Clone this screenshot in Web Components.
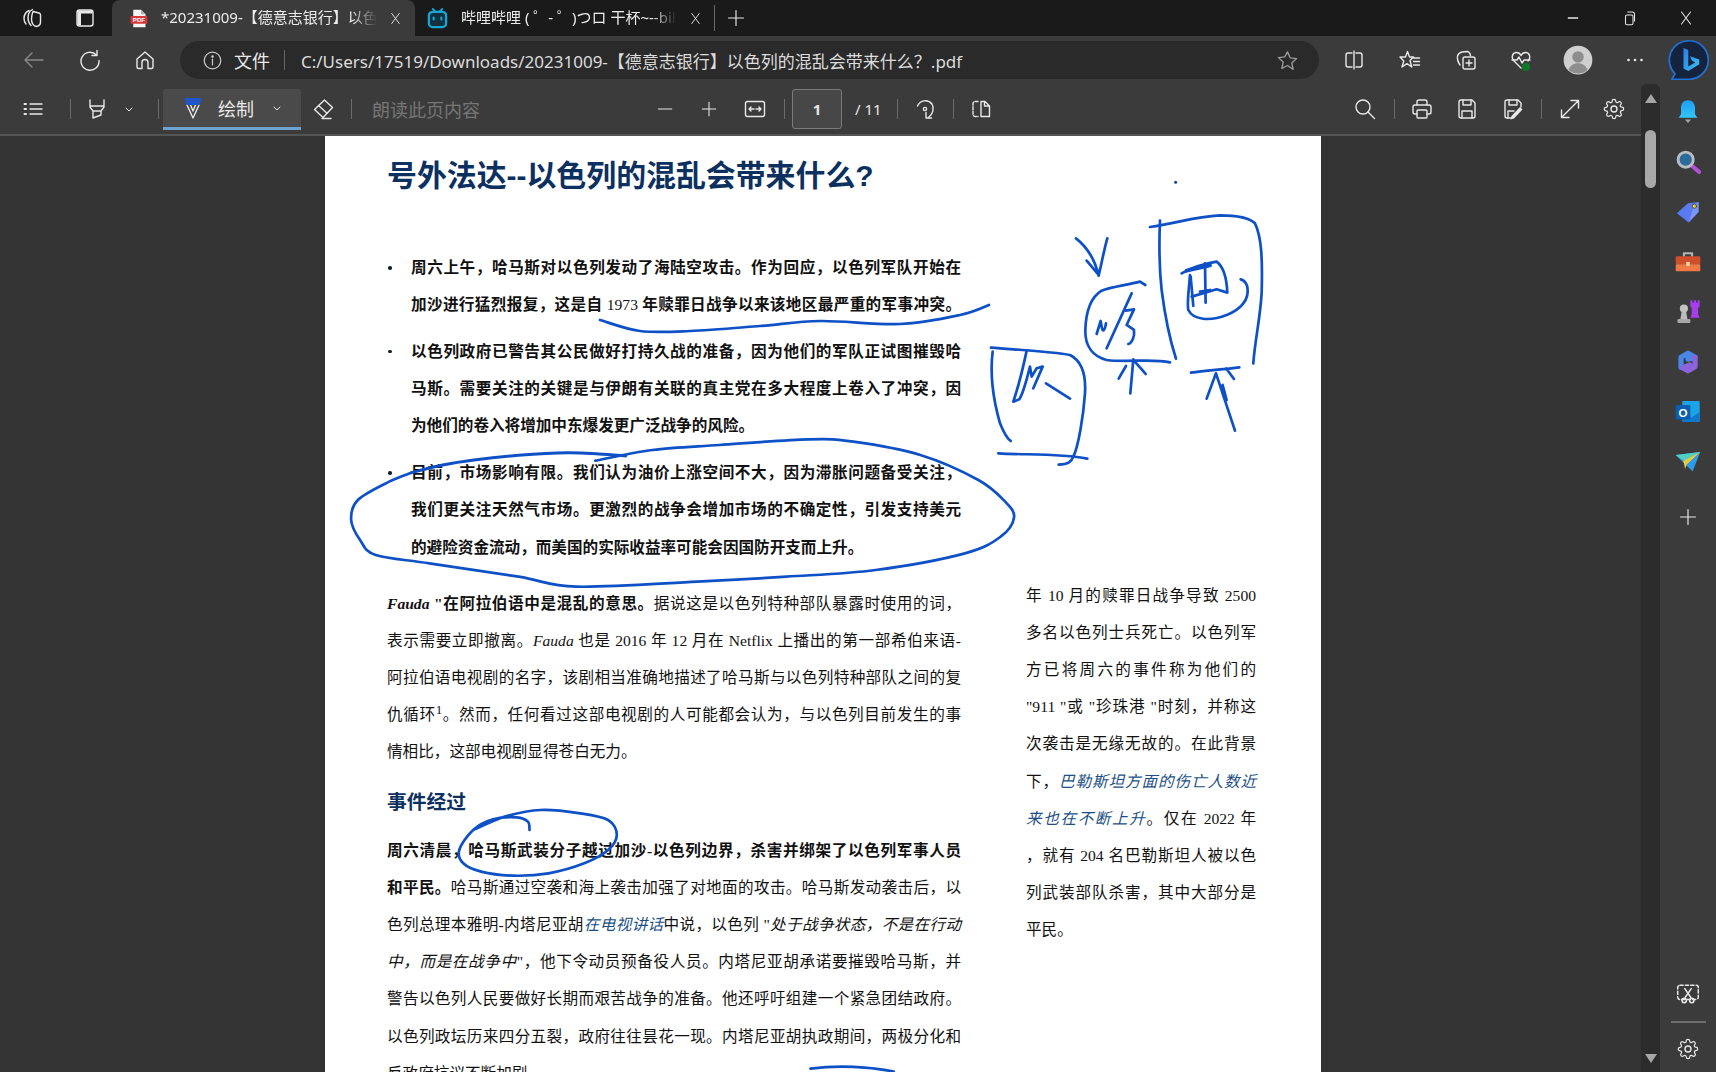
<!DOCTYPE html>
<html lang="zh-CN">
<head>
<meta charset="utf-8">
<title>PDF</title>
<style>
html,body{margin:0;height:100%;overflow:hidden;background:#333;}
</style>
</head>
<body>
<browser-window>
	<tab-strip>
		<ui-icon name="workspaces" style="margin-left:20px"></ui-icon>
		<ui-icon name="tabs" style="margin-left:29px"></ui-icon>
		<browser-tab active icon="pdf" style="margin-left:15px">*20231009-【德意志银行】以色列的混乱会带来什么？.pdf</browser-tab>
		<browser-tab icon="bili">哔哩哔哩 ( ゜- ゜)つロ 干杯~--bilibili</browser-tab>
		<tool-sep style="margin-left:7px;height:26px"></tool-sep>
		<ui-icon name="plus" size="20" style="margin-left:11px"></ui-icon>
		<ui-icon name="minimize" size="16" style="margin-left:auto"></ui-icon>
		<ui-icon name="restore" size="18" style="margin-left:40px"></ui-icon>
		<ui-icon name="close" size="18" style="margin-left:38px;margin-right:21px"></ui-icon>
	</tab-strip>
	<address-bar>
		<ui-icon name="back" style="margin-left:22px;color:#8a8a8a"></ui-icon>
		<ui-icon name="refresh" style="margin-left:32px"></ui-icon>
		<ui-icon name="home" style="margin-left:31px"></ui-icon>
		<url-pill style="margin-left:23px">C:/Users/17519/Downloads/20231009-【德意志银行】以色列的混乱会带来什么？.pdf</url-pill>
		<ui-icon name="split" style="margin-left:23px"></ui-icon>
		<ui-icon name="fav" style="margin-left:32px"></ui-icon>
		<ui-icon name="collections" style="margin-left:32px"></ui-icon>
		<ui-icon name="health" style="margin-left:31px"></ui-icon>
		<ui-icon name="avatar" size="30" style="margin-left:30px"></ui-icon>
		<ui-icon name="dots" style="margin-left:30px"></ui-icon>
		<ui-icon name="bing" size="44" style="margin-left:20px"></ui-icon>
	</address-bar>
	<main-row>
		<viewer-pane>
			<pdf-toolbar slot="bar">
				<ui-icon name="list" style="margin-left:21px"></ui-icon>
				<tool-sep style="margin-left:25px"></tool-sep>
				<ui-icon name="highlight" style="margin-left:14px"></ui-icon>
				<ui-icon name="chev" size="12" style="margin-left:14px"></ui-icon>
				<tool-sep style="margin-left:23px"></tool-sep>
				<draw-button style="margin-left:4px">绘制</draw-button>
				<ui-icon name="eraser" style="margin-left:10px"></ui-icon>
				<tool-sep style="margin-left:16px"></tool-sep>
				<tool-label style="margin-left:20px;width:108px;color:#767676">朗读此页内容</tool-label>
				<ui-icon name="minus" size="18" style="margin-left:176px"></ui-icon>
				<ui-icon name="plus" size="18" style="margin-left:26px"></ui-icon>
				<ui-icon name="fit" style="margin-left:25px"></ui-icon>
				<tool-sep style="margin-left:17px"></tool-sep>
				<page-input style="margin-left:7px">1</page-input>
				<tool-label style="margin-left:13px;width:26px;font-size:15px">/ 11</tool-label>
				<tool-sep style="margin-left:16px"></tool-sep>
				<ui-icon name="rotate" style="margin-left:15px"></ui-icon>
				<tool-sep style="margin-left:16px"></tool-sep>
				<ui-icon name="spread" style="margin-left:15px"></ui-icon>
				<ui-icon name="search" style="margin-left:auto"></ui-icon>
				<tool-sep style="margin-left:17px"></tool-sep>
				<ui-icon name="print" style="margin-left:15px"></ui-icon>
				<ui-icon name="save" style="margin-left:21px"></ui-icon>
				<ui-icon name="saveas" style="margin-left:22px"></ui-icon>
				<tool-sep style="margin-left:16px"></tool-sep>
				<ui-icon name="expand" style="margin-left:16px"></ui-icon>
				<ui-icon name="gear" style="margin-left:20px;margin-right:15px"></ui-icon>
			</pdf-toolbar>
			<pdf-page>
				<pdf-title>号外法达--以色列的混乱会带来什么?</pdf-title>
				<pdf-bullets>
					<pdf-bullet>
						<pdf-line><b>周六上午，哈马斯对以色列发动了海陆空攻击。作为回应，以色列军队开始在</b></pdf-line>
						<pdf-line><b>加沙进行猛烈报复，这是自 </b>1973<b> 年赎罪日战争以来该地区最严重的军事冲突。</b></pdf-line>
					</pdf-bullet>
					<pdf-bullet>
						<pdf-line><b>以色列政府已警告其公民做好打持久战的准备，因为他们的军队正试图摧毁哈</b></pdf-line>
						<pdf-line><b>马斯。需要关注的关键是与伊朗有关联的真主党在多大程度上卷入了冲突，因</b></pdf-line>
						<pdf-line last><b>为他们的卷入将增加中东爆发更广泛战争的风险。</b></pdf-line>
					</pdf-bullet>
					<pdf-bullet>
						<pdf-line><b>目前，市场影响有限。我们认为油价上涨空间不大，因为滞胀问题备受关注，</b></pdf-line>
						<pdf-line><b>我们更关注天然气市场。更激烈的战争会增加市场的不确定性，引发支持美元</b></pdf-line>
						<pdf-line last><b>的避险资金流动，而美国的实际收益率可能会因国防开支而上升。</b></pdf-line>
					</pdf-bullet>
				</pdf-bullets>
				<pdf-columns>
					<div slot="main">
						<pdf-line><b><i>Fauda</i> "在阿拉伯语中是混乱的意思。</b>据说这是以色列特种部队暴露时使用的词，</pdf-line>
						<pdf-line>表示需要立即撤离。<i>Fauda</i> 也是 2016 年 12 月在 Netflix 上播出的第一部希伯来语-</pdf-line>
						<pdf-line>阿拉伯语电视剧的名字，该剧相当准确地描述了哈马斯与以色列特种部队之间的复</pdf-line>
						<pdf-line>仇循环<sup style="line-height:0">1</sup>。然而，任何看过这部电视剧的人可能都会认为，与以色列目前发生的事</pdf-line>
						<pdf-line last>情相比，这部电视剧显得苍白无力。</pdf-line>
						<pdf-heading>事件经过</pdf-heading>
						<pdf-line><b>周六清晨，哈马斯武装分子越过加沙-以色列边界，杀害并绑架了以色列军事人员</b></pdf-line>
						<pdf-line><b>和平民。</b>哈马斯通过空袭和海上袭击加强了对地面的攻击。哈马斯发动袭击后，以</pdf-line>
						<pdf-line>色列总理本雅明-内塔尼亚胡<pdf-link>在电视讲话</pdf-link>中说，以色列 "<i>处于战争状态，不是在行动</i></pdf-line>
						<pdf-line><i>中，而是在战争中</i>"，他下令动员预备役人员。内塔尼亚胡承诺要摧毁哈马斯，并</pdf-line>
						<pdf-line>警告以色列人民要做好长期而艰苦战争的准备。他还呼吁组建一个紧急团结政府。</pdf-line>
						<pdf-line>以色列政坛历来四分五裂，政府往往昙花一现。内塔尼亚胡执政期间，两极分化和</pdf-line>
						<pdf-line last>反政府抗议不断加剧。</pdf-line>
					</div>
					<div slot="side">
						<pdf-line>年 10 月的赎罪日战争导致 2500</pdf-line>
						<pdf-line>多名以色列士兵死亡。以色列军</pdf-line>
						<pdf-line>方已将周六的事件称为他们的</pdf-line>
						<pdf-line>"911 "或 "珍珠港 "时刻，并称这</pdf-line>
						<pdf-line>次袭击是无缘无故的。在此背景</pdf-line>
						<pdf-line>下，<pdf-link>巴勒斯坦方面的伤亡人数近</pdf-link></pdf-line>
						<pdf-line><pdf-link>来也在不断上升</pdf-link>。仅在 2022 年</pdf-line>
						<pdf-line>，就有 204 名巴勒斯坦人被以色</pdf-line>
						<pdf-line>列武装部队杀害，其中大部分是</pdf-line>
						<pdf-line last>平民。</pdf-line>
					</div>
				</pdf-columns>
			</pdf-page>
		</viewer-pane>
		<scroll-bar></scroll-bar>
		<side-bar>
			<ui-icon name="bell" size="28"></ui-icon>
			<ui-icon name="mag" size="28"></ui-icon>
			<ui-icon name="tag" size="28"></ui-icon>
			<ui-icon name="toolbox" size="28"></ui-icon>
			<ui-icon name="chess" size="28"></ui-icon>
			<ui-icon name="copilot" size="28"></ui-icon>
			<ui-icon name="outlook" size="28"></ui-icon>
			<ui-icon name="send" size="28"></ui-icon>
			<ui-icon name="plus" size="20" style="margin-top:20px"></ui-icon>
			<ui-icon name="shot" size="26" style="margin-top:auto"></ui-icon>
			<side-rule></side-rule>
			<ui-icon name="gear" size="24" style="margin-bottom:11px"></ui-icon>
		</side-bar>
	</main-row>
	<ink-layer></ink-layer>
</browser-window>

<script>
const UI_FONT = `"Noto Sans","Noto Sans CJK SC",sans-serif`;
const PDF_FONT = `"Liberation Serif","Noto Sans CJK SC",serif`;

const GEAR = 'M19.4 15a1.65 1.65 0 0 0 .33 1.82l.06.06a2 2 0 0 1 0 2.83 2 2 0 0 1-2.83 0l-.06-.06a1.65 1.65 0 0 0-1.82-.33 1.65 1.65 0 0 0-1 1.51V21a2 2 0 0 1-2 2 2 2 0 0 1-2-2v-.09A1.65 1.65 0 0 0 9 19.4a1.65 1.65 0 0 0-1.82.33l-.06.06a2 2 0 0 1-2.83 0 2 2 0 0 1 0-2.83l.06-.06a1.65 1.65 0 0 0 .33-1.82 1.65 1.65 0 0 0-1.51-1H3a2 2 0 0 1-2-2 2 2 0 0 1 2-2h.09A1.65 1.65 0 0 0 4.6 9a1.65 1.65 0 0 0-.33-1.82l-.06-.06a2 2 0 0 1 0-2.83 2 2 0 0 1 2.83 0l.06.06a1.65 1.65 0 0 0 1.82.33H9a1.65 1.65 0 0 0 1-1.51V3a2 2 0 0 1 2-2 2 2 0 0 1 2 2v.09a1.65 1.65 0 0 0 1 1.51 1.65 1.65 0 0 0 1.82-.33l.06-.06a2 2 0 0 1 2.83 0 2 2 0 0 1 0 2.83l-.06.06a1.65 1.65 0 0 0-.33 1.82V9a1.65 1.65 0 0 0 1.51 1H21a2 2 0 0 1 2 2 2 2 0 0 1-2 2h-.09a1.65 1.65 0 0 0-1.51 1z';

const ICONS = {
	workspaces: '<path d="M9 4.5C6 6 4 9 4 12.5c0 2 .7 4 2 5.5M12.5 3.5C9.8 5 8 8 8 12c0 3 1 5.5 3 7.5"/><path d="M13 5.5l6 1.5c1 .3 1.5 1 1.5 2v7c0 1.5-1 3.5-2.5 4l-2 .5c-3-1-4.5-4-4.5-7.5 0-3 .7-5.5 1.5-7.5z"/>',
	tabs: '<rect x="4" y="4" width="16" height="16" rx="2.5"/><path d="M4.5 4.5h15v3H8v12H4.5z" fill="currentColor" stroke="none"/>',
	pdf: '<path d="M6 2h9l5 5v15H6z" fill="#f4f4f4" stroke="none"/><path d="M15 2v5h5z" fill="#aaa" stroke="none"/><rect x="3" y="9" width="19" height="9" rx="1" fill="#d9383a" stroke="none"/><text x="12.5" y="16" font-size="7" font-weight="700" font-family="Liberation Sans" fill="#fff" stroke="none" text-anchor="middle">PDF</text>',
	bili: '<path d="M7 2l3 3M17 2l-3 3" stroke="#17a5d6" stroke-width="2"/><rect x="3" y="5" width="18" height="16" rx="4" fill="#12303e" stroke="#17a5d6" stroke-width="2.4"/><path d="M8 11v2M16 11v2" stroke="#17a5d6" stroke-width="2.2"/>',
	plus: '<path d="M12 3v18M3 12h18"/>',
	minimize: '<path d="M5 12h14" stroke-width="2"/>',
	restore: '<rect x="6" y="8" width="10" height="13" rx="2"/><path d="M9 4h6a3 3 0 0 1 3 3v9" />',
	close: '<path d="M6 4l12 16M18 4L6 20"/>',
	back: '<path d="M21 12H3M10 5l-7 7 7 7"/>',
	refresh: '<path d="M18.5 7A9 9 0 1 0 21 12.5"/><path d="M19 2.5V7.5H14"/>',
	home: '<path d="M4 11l8-7 8 7v8a1.5 1.5 0 0 1-1.5 1.5H15v-6a3 3 0 0 0-6 0v6H5.5A1.5 1.5 0 0 1 4 19z"/>',
	info: '<circle cx="12" cy="12" r="9.5"/><path d="M12 10.5V17"/><circle cx="12" cy="7.5" r=".8" fill="currentColor"/>',
	star: '<path d="M12 3l2.8 6.2 6.7.8-5 4.6 1.4 6.7L12 17.2 6.1 20.3l1.4-6.7-5-4.6 6.7-.8z"/>',
	split: '<path d="M10 5H6a2 2 0 0 0-2 2v10a2 2 0 0 0 2 2h4M14 5h4a2 2 0 0 1 2 2v10a2 2 0 0 1-2 2h-4M12 3v18"/>',
	fav: '<path d="M9.5 3.5l2 5.5h4l-3.5 3.5 1.8 6.5-4.8-3.4-5 3.4 1.8-6L2 9h5.5z"/><path d="M15.5 10h6M15.5 13.5h6M15.5 17h6"/>',
	collections: '<path d="M6 17c-2-3-3-6-2.5-9C4 6 6 4.5 8 4l5-.5c1.5 0 3 1.5 3.5 4"/><rect x="9" y="9" width="12" height="12" rx="2"/><path d="M15 12v6M12 15h6"/>',
	health: '<path d="M12 20L5 13C2 10 3 5 7 4.5c2-.2 4 1 5 3 1-2 3-3.2 5-3 4 .5 5 5.5 2 8.5"/><path d="M3 12h5l2-3 3 6 2-3h6"/><circle cx="17" cy="19" r="4" fill="#0f7a26" stroke="none"/>',
	avatar: '<circle cx="12" cy="12" r="11.5" fill="#cfcfcf" stroke="none"/><circle cx="12" cy="9.5" r="4.6" fill="#8e8e8e" stroke="none"/><path d="M4.4 20c1-3.6 4-5.5 7.6-5.5s6.6 1.9 7.6 5.5A11.5 11.5 0 0 1 4.4 20z" fill="#8e8e8e" stroke="none"/>',
	dots: '<circle cx="5.5" cy="12" r="1.3" fill="currentColor" stroke="none"/><circle cx="12" cy="12" r="1.3" fill="currentColor" stroke="none"/><circle cx="18.5" cy="12" r="1.3" fill="currentColor" stroke="none"/>',
	bing: '<defs><linearGradient id="b" x1="0" y1="0" x2="1" y2="1"><stop offset="0" stop-color="#2b7de9"/><stop offset="1" stop-color="#36c3f0"/></linearGradient></defs><path d="M12 1.5a10.5 10.5 0 0 1 0 21H2.6l1.8-3A10.5 10.5 0 0 1 12 1.5z" fill="#15233c" stroke="#1d74d8" stroke-width=".9"/><path d="M9 5.5l2.6 1v9l3.8-2.2-1.8-.9-1-2.5 5 1.8v2.6l-6 3.7-2.6-1.4z" fill="url(#b)" stroke="none"/>',
	list: '<path d="M9 7h12M9 12h12M9 17h12"/><path d="M3.5 7h1.5M3.5 12h1.5M3.5 17h1.5" stroke-width="2"/>',
	highlight: '<path d="M5 3v7l3 4h8l3-4V3M5 9h14M8 14v7l8-3v-4"/>',
	chev: '<path d="M6 10l6 6 6-6" stroke-width="2"/>',
	draw: '<path d="M6 9l6 13 6-13"/><path d="M9.5 9l2.5 6 2.5-6"/><path d="M3.5 2h17l-2 7H5.5z" fill="#1f56c8" stroke="none"/>',
	eraser: '<path d="M13.5 3l8 7.5-9.5 10-8.5-8z"/><path d="M7.5 8.5l8.5 7.8M11 21.5h9"/>',
	minus: '<path d="M3 12h18"/>',
	fit: '<rect x="2.5" y="4.5" width="19" height="15" rx="2"/><path d="M6 12h5M6 12l2-2M6 12l2 2M18 12h-5M18 12l-2-2M18 12l-2 2"/>',
	rotate: '<path d="M4.5 9A8.5 8.5 0 0 1 19 7c2.5 4.5 1 10-3.5 13.5"/><path d="M13 15.500v5.500h5.500"/><circle cx="12" cy="12" r="1.6"/>',
	spread: '<path d="M9 4.5H6a2 2 0 0 0-2 2v11a2 2 0 0 0 2 2h3" stroke-dasharray="3 1.5"/><path d="M12 4.5h4l4.500 4.500v10.500H12zM15.500 4.500V9h5"/>',
	search: '<circle cx="10" cy="10" r="7"/><path d="M15 15l6.5 6.5"/>',
	print: '<path d="M7 8V5a2 2 0 0 1 2-2h6a2 2 0 0 1 2 2v3"/><path d="M7 17H5a2 2 0 0 1-2-2v-5a2 2 0 0 1 2-2h14a2 2 0 0 1 2 2v5a2 2 0 0 1-2 2h-2"/><rect x="7" y="13" width="10" height="8" rx="1"/>',
	save: '<path d="M4 5a2 2 0 0 1 2-2h11l3 3v13a2 2 0 0 1-2 2H6a2 2 0 0 1-2-2z"/><path d="M8 3v5h8V3M7 21v-7h10v7"/>',
	saveas: '<path d="M10 21H6a2 2 0 0 1-2-2V5a2 2 0 0 1 2-2h11l3 3v4"/><path d="M8 3v5h8V3M7 21v-7h6"/><path d="M21.5 12.5l-8.5 9-3.500 1 1-3.500 8.500-9z" fill="currentColor" stroke="none"/>',
	expand: '<path d="M3.5 20.5L20.5 3.5M13 3.5h7.500V11M3.500 13v7.500H11"/>',
	gear: `<path d="${GEAR}" transform="translate(1.4 1.4) scale(.88)"/><circle cx="12" cy="12" r="3"/>`,
	bell: '<defs><linearGradient id="bl" x1="0" y1="0" x2="0" y2="1"><stop offset="0" stop-color="#1b9df0"/><stop offset="1" stop-color="#35c6fb"/></linearGradient></defs><path d="M12 2c-4 0-6 3-6 6.500V14l-2 3h16l-2-3V8.500C18 5 16 2 12 2z" fill="url(#bl)" stroke="none"/><path d="M9.500 18.500h5L12 21.500z" fill="#aaa" stroke="none"/>',
	mag: '<path d="M15 15l6.500 5.500" stroke="#b44fd8" stroke-width="3.500"/><circle cx="10" cy="10" r="6.500" fill="#2c6c9a" stroke="#b9bdc2" stroke-width="2.500"/>',
	tag: '<path d="M2.500 13L12 4.500 21 3.500 21 12 12.500 21z" fill="#5a7bef" stroke="none"/><path d="M12.500 21L21 12 21 3.500 17 7z" fill="#7d95f5" stroke="none"/><circle cx="17.500" cy="7" r="1.800" fill="#e6d23e" stroke="#333" stroke-width=".6"/>',
	toolbox: '<path d="M8.500 7V4.500h7V7" stroke="#b5b5b5" stroke-width="1.800"/><rect x="1.500" y="7" width="21" height="7" rx="1" fill="#d04f2b" stroke="none"/><rect x="1.500" y="14" width="21" height="6" rx="1" fill="#f07a45" stroke="none"/><rect x="10.500" y="12" width="3" height="3.500" fill="#f4d5a8" stroke="none"/>',
	chess: '<circle cx="8.500" cy="9" r="3.500" fill="#c2c2c2" stroke="none"/><path d="M6.500 12h4l1 6h-6z" fill="#bcbcbc" stroke="none"/><rect x="3" y="18" width="11" height="3.500" rx="1" fill="#a8a8a8" stroke="none"/><path d="M14 2h1.800v1.800h1.400V2h1.600v1.800h1.400V2H22v5l-1.300 1.500V14l1.300 3H14l1.200-3V8.500L14 7z" fill="#a63ef0" stroke="none"/>',
	copilot: '<path d="M6 16.500V8L12 4.500 18 8l-6 1.500" stroke="#4a86e8" stroke-width="4.500" fill="none"/><path d="M18 8v8l-6 3.500L7.500 17l6-2.500" stroke="#8a63dd" stroke-width="4.500" fill="none"/>',
	outlook: '<rect x="7" y="2.500" width="15" height="18" rx="1" fill="#1aa3e8" stroke="none"/><path d="M7 12l8 5 7-5v8.500H7z" fill="#0f78c8" stroke="none"/><rect x="1.500" y="6" width="12.500" height="12.500" rx="1" fill="#0b5db0" stroke="none"/><text x="7.700" y="16" font-size="10" font-weight="700" font-family="Liberation Sans" fill="#fff" stroke="none" text-anchor="middle">O</text>',
	send: '<path d="M1.500 6l21-2.500L16 20l-5.500-5z" fill="#2d9be8" stroke="none"/><path d="M1.500 6l21-2.500L8 11z" fill="#4fd0c4" stroke="none"/><path d="M22.500 3.500L8 11l1.500 7 1.500-4z" fill="#eacb3b" stroke="none"/>',
	shot: '<rect x="2.500" y="4" width="19" height="13" rx="2" stroke-dasharray="3 2"/><path d="M9 7l5.500 8M15 7l-5.500 8"/><circle cx="8.500" cy="18" r="2"/><circle cx="15.500" cy="18" r="2"/>'
};

class UiIcon extends HTMLElement {
	constructor() {
		super();
		const size = this.getAttribute('size') || 24;
		this.attachShadow({mode: 'open'}).innerHTML = `
<style>
:host{display:block;flex:none;width:${size}px;height:${size}px;color:#e8e8e8;}
svg{display:block;width:100%;height:100%;fill:none;stroke:currentColor;stroke-width:1.4;stroke-linecap:round;stroke-linejoin:round;}
</style>
<svg viewBox="0 0 24 24">${ICONS[this.getAttribute('name')] || ''}</svg>`;
	}
}

// plain wrappers, only a box and a slot
function box(tag, css, html) {
	customElements.define(tag, class extends HTMLElement {
		constructor() {
			super();
			this.attachShadow({mode: 'open'}).innerHTML = `<style>${css}</style>${html || '<slot></slot>'}`;
		}
	});
}

customElements.define('ui-icon', UiIcon);

box('browser-window', `:host{display:flex;flex-direction:column;position:relative;width:1716px;height:1072px;overflow:hidden;background:#3b3b3b;color:#e8e8e8;font-family:${UI_FONT};}`);
box('tab-strip', `:host{display:flex;align-items:center;flex:none;height:36px;background:#1a1a1a;}`);
box('address-bar', `:host{display:flex;align-items:center;flex:none;height:48px;background:#3b3b3b;}`);
box('main-row', `:host{display:flex;flex:1;min-height:0;}`);
box('viewer-pane', `:host{display:flex;flex-direction:column;flex:1;min-width:0;background:#333;}`, `<slot name="bar"></slot><slot></slot>`);
box('pdf-toolbar', `:host{display:flex;align-items:center;flex:none;height:50px;box-sizing:content-box;background:#3b3b3b;border-bottom:2px solid #555;font-size:18px;}`);
box('tool-sep', `:host{display:block;flex:none;width:1px;height:20px;background:#6a6a6a;}`);
box('tool-label', `:host{display:block;flex:none;white-space:nowrap;font-size:18px;}`);
box('side-rule', `:host{display:block;flex:none;width:35px;height:2px;background:#6e6e6e;margin:3px 0 3px;}`);

customElements.define('browser-tab', class extends HTMLElement {
	constructor() {
		super();
		const active = this.hasAttribute('active');
		const icon = this.getAttribute('icon');
		this.attachShadow({mode: 'open'}).innerHTML = `
<style>
:host{display:flex;align-items:center;flex:none;box-sizing:border-box;height:36px;font-size:15px;}
:host([active]){width:303px;padding:0 12px 0 16px;background:#3b3b3b;border-radius:8px 8px 0 0;}
:host(:not([active])){width:292px;padding:0 4px 0 11px;}
.t{flex:1;min-width:0;margin:0 11px 3px 12px;white-space:nowrap;overflow:hidden;color:#ececec;
	-webkit-mask-image:linear-gradient(90deg,#000 88%,transparent);mask-image:linear-gradient(90deg,#000 88%,transparent);}
</style>
<ui-icon name="${icon}" size="${active ? 21 : 23}"></ui-icon>
<div class="t"><slot></slot></div>
<ui-icon name="close" size="15" style="color:#f4f4f4"></ui-icon>`;
	}
});

box('url-pill', `
:host{display:flex;align-items:center;flex:none;box-sizing:border-box;width:1139px;height:38px;padding:0 20px 0 22px;background:#2a2a2a;border-radius:19px;font-size:17px;}
.file{margin-left:11px;font-size:18px;}
.sep{width:1px;height:20px;background:#666;margin:0 16px 0 14px;}
.url{white-space:nowrap;color:#dcdcdc;}
ui-icon{color:#c8c8c8;}
`, `<ui-icon name="info" size="21"></ui-icon><span class="file">文件</span><span class="sep"></span><span class="url"><slot></slot></span><ui-icon name="star" size="23" style="margin-left:auto;color:#9a9a9a"></ui-icon>`);

box('draw-button', `
:host{display:flex;align-items:center;flex:none;box-sizing:border-box;width:138px;height:41px;background:#4a4a4a;border-radius:3px 3px 0 0;border-bottom:3px solid #6ea3d0;font-size:18px;}
ui-icon.d{margin-left:18px;}
.t{margin-left:13px;}
ui-icon.c{margin-left:17px;}
`, `<ui-icon class="d" name="draw"></ui-icon><span class="t"><slot></slot></span><ui-icon class="c" name="chev" size="12"></ui-icon>`);

box('page-input', `:host{display:flex;align-items:center;justify-content:center;flex:none;box-sizing:border-box;width:50px;height:40px;border:1px solid #7a7a7a;border-radius:3px;background:#474747;font-size:15px;font-weight:700;}`);

box('scroll-bar', `
:host{display:flex;flex-direction:column;align-items:center;flex:none;box-sizing:border-box;width:19px;background:#2c2c2c;border-radius:6px 6px 0 0;padding:10px 0 9px;}
.u,.d{width:0;height:0;border-left:6px solid transparent;border-right:6px solid transparent;}
.u{border-bottom:9px solid #a6a6a6;}
.d{border-top:9px solid #a6a6a6;margin-top:auto;}
.th{width:11px;height:58px;margin-top:27px;background:#a8a8a8;border-radius:6px;}
`, `<div class="u"></div><div class="th"></div><div class="d"></div>`);

box('side-bar', `
:host{display:flex;flex-direction:column;align-items:center;flex:none;box-sizing:border-box;width:56px;padding-top:3px;background:#3b3b3b;}
::slotted(ui-icon){margin-top:11px;margin-bottom:11px;}
`);

box('pdf-page', `:host{display:block;flex:1;box-sizing:border-box;width:996px;margin-left:325px;padding:20px 0 0 62px;background:#fff;color:#111;font-family:${PDF_FONT};font-size:15.6px;overflow:hidden;}`);
box('pdf-title', `:host{display:block;height:40px;line-height:40px;font-family:"Liberation Sans","Noto Sans CJK SC",sans-serif;font-size:29.9px;font-weight:700;color:#0c3060;white-space:nowrap;}`);
box('pdf-bullets', `:host{display:flex;flex-direction:column;gap:9.6px;width:574px;margin-top:53px;}`);
box('pdf-bullet', `
:host{display:block;position:relative;padding-left:24px;}
:host::before{content:"";position:absolute;left:1px;top:17px;width:3.5px;height:3.5px;border-radius:50%;background:#123;}
`);
box('pdf-columns', `
:host{display:grid;grid-template-columns:574px 230px;column-gap:65px;margin-top:19px;}
.s{margin-top:-8px;}
`, `<div><slot name="main"></slot></div><div class="s"><slot name="side"></slot></div>`);
box('pdf-line', `
:host{display:block;height:37.2px;line-height:37.2px;white-space:nowrap;text-align:justify;text-align-last:justify;}
:host([last]){text-align-last:left;}
`);
box('pdf-heading', `:host{display:block;height:30px;line-height:30px;margin:16px 0 15px;font-family:"Liberation Sans","Noto Sans CJK SC",sans-serif;font-size:19.8px;font-weight:700;color:#0c3060;}`);
box('pdf-link', `:host{display:inline;font-style:italic;color:#1c4f86;}`);

customElements.define('ink-layer', class extends HTMLElement {
	constructor() {
		super();
		// point lists read off the reference, smoothed with catmull-rom
		const smooth = pts => {
			let d = `M${pts[0]} ${pts[1]}`;
			const p = [];
			for (let i = 0; i < pts.length; i += 2) p.push([pts[i], pts[i + 1]]);
			for (let i = 0; i < p.length - 1; i++) {
				const a = p[i - 1] || p[i], b = p[i], c = p[i + 1], e = p[i + 2] || c;
				d += `C${b[0] + (c[0] - a[0]) / 6} ${b[1] + (c[1] - a[1]) / 6} ${c[0] - (e[0] - b[0]) / 6} ${c[1] - (e[1] - b[1]) / 6} ${c[0]} ${c[1]}`;
			}
			return d;
		};
		const big = smooth([160,128,230,105,300,90,400,76,510,68,580,72,640,78]);
		const big2 = smooth([572,92,700,60,850,45,1050,28,1150,35,1300,75,1430,150,1490,215,1510,262,1480,320,1400,370,1200,420,1000,440,800,455,530,470,400,440,200,400,80,375,45,330,25,270,40,210,110,155,160,128]);
		const small = smooth([402,150,398,125,370,112,310,118,260,150,225,210,235,250,280,275,360,287,450,280,540,250,600,210,622,165,600,120,530,100,430,90,340,110,260,150]);
		const under = smooth([600,320,640,331,690,331,760,326,820,321,900,324,960,315,989,305]);
		this.attachShadow({mode: 'open'}).innerHTML = `
<style>
:host{position:absolute;left:0;top:0;width:1716px;height:1072px;pointer-events:none;}
svg{display:block;width:100%;height:100%;}
path{fill:none;stroke:#0e50c6;stroke-width:2.7;stroke-linecap:round;stroke-linejoin:round;vector-effect:non-scaling-stroke;}
</style>
<svg viewBox="0 0 1716 1072">
<path d="${under}"/>
<g transform="translate(340 430) scale(.4464 .3333)"><path d="${big}" style="stroke-width:3"/><path d="${big2}"/></g>
<g transform="translate(370 780) scale(.3968 .3333)"><path d="${small}"/></g>
<g transform="translate(370 780) scale(.3968 .3333)"><path d="M1110 866C1180 855 1260 860 1320 875"/></g>
<g transform="translate(960 160) scale(.3333)">
	<circle cx="647" cy="67" r="4.5" fill="#0e3f9a"/>
	<path d="M570 201C650 190 700 170 780 166C830 166 870 175 885 190C905 230 908 300 905 400C900 480 885 540 880 610"/>
	<path d="M600 182C598 230 595 300 605 390C615 470 630 540 648 596"/>
	<path d="M665 340C700 320 740 310 770 305C790 320 800 350 802 398L770 388L695 410"/>
	<path d="M680 332L750 316" style="stroke-width:4"/>
	<path d="M690 345C688 380 680 430 685 450C700 480 750 485 800 465C840 450 870 420 862 380C858 365 850 360 842 358"/>
	<path d="M692 350L700 438M735 310L737 428M720 395L750 390"/>
	<path d="M693 638C740 632 790 628 838 622M798 625L822 657M740 716L768 640L825 812M788 675L800 720"/>
	<path d="M556 375L540 365C500 375 450 382 425 392C395 410 378 450 376 510C375 560 400 590 440 600C500 608 580 595 630 607"/>
	<path d="M410 522L422 483L425 500C428 520 435 510 438 490M515 400L440 565M497 452L522 448L500 495L522 510C525 530 515 550 505 552"/>
	<path d="M476 656L498 618M520 598L511 700M520 600L557 642"/>
	<path d="M348 235C380 260 405 300 416 347C425 310 432 270 442 235M380 302L416 345"/>
	<path d="M93 563C180 570 280 575 330 585C370 605 378 650 375 700C370 770 355 860 340 890C335 905 325 913 296 914"/>
	<path d="M98 575C90 640 100 720 120 790C130 815 140 835 152 843"/>
	<path d="M115 880C200 885 300 880 382 896"/>
	<path d="M200 572C190 620 175 680 160 725L178 718C190 700 200 660 210 620L215 650L230 625L248 620L220 685M258 670L330 716"/>
</g>
</svg>`;
	}
});
</script>
</body>
</html>
